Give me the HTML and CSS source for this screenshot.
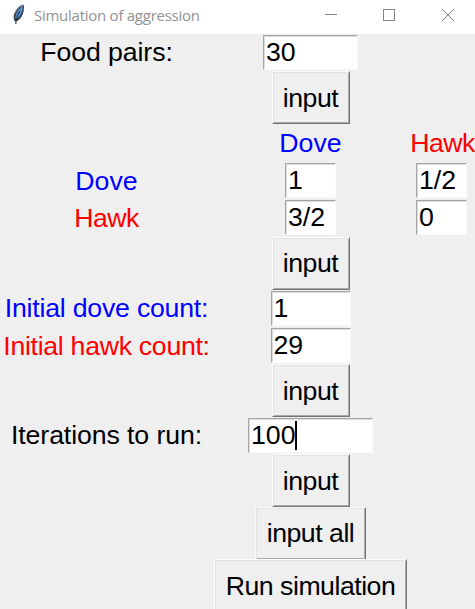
FILE: index.html
```html
<!DOCTYPE html>
<html lang="en">
<head>
<meta charset="utf-8">
<title>Simulation of aggression</title>
<link rel="stylesheet" href="styles.css">
</head>
<body>
<header class="titlebar">
  <svg class="feather" width="14" height="22" viewBox="0 0 14 22">
    <path d="M2.200 16.500C.7 12 2.500 7.200 6 3.500 8 1.400 10.500.4 11.600.8c1 3.200.1 8.500-2.200 12.200C7.800 15.500 5.500 17 3.500 17.500z" fill="#35414d"/>
    <path d="M3.500 14.500C3 11 5.500 6 10.800 2 11 6 9 11.500 4.800 15z" fill="#5594d6"/>
    <path d="M2.500 9.500C4 6 7 2.500 10.500 1.300" fill="none" stroke="#a2a9af"/>
    <path d="M3.800 20C3.800 16 5.200 11 8 7" fill="none" stroke="#1b222a"/>
  </svg>
  <span class="title">Simulation of aggression</span>
  <svg class="controls" width="132" height="14" viewBox="0 0 132 14" fill="none" stroke="#858585" shape-rendering="crispEdges">
    <path d="M0 6.500h12"/>
    <path d="M58.500 1.500h11v11h-11z"/>
    <path d="M117 1l12 12M129 1l-12 12" shape-rendering="auto"/>
  </svg>
</header>
<main class="form">
  <label class="c1 l-food">Food pairs:</label>
  <input class="c2 w-food" value="30">
  <button class="c2">input</button>
  <span class="c2 dove">Dove</span>
  <span class="c3 hawk name">Hawk</span>
  <span class="c1 dove">Dove</span>
  <input class="c2 w-cell" value="1">
  <input class="c3 w-cell" value="1/2">
  <span class="c1 hawk name">Hawk</span>
  <input class="c2 w-cell" value="3/2">
  <input class="c3 w-cell" value="0">
  <button class="c2">input</button>
  <label class="c1 dove l-dove">Initial dove count:</label>
  <input class="c2 w-count" value="1">
  <label class="c1 hawk l-hawk">Initial hawk count:</label>
  <input class="c2 w-count" value="29">
  <button class="c2">input</button>
  <label class="c1 l-iter">Iterations to run:</label>
  <div class="c2 caret-field"><input class="w-iter" value="100"><i class="caret"></i></div>
  <button class="c2">input</button>
  <button class="c2 b-all">input all</button>
  <button class="c2 b-run">Run simulation</button>
</main>
</body>
</html>
```
FILE: styles.css
```css
* { box-sizing: border-box; }
html, body { height: 100%; }
body {
  margin: 0;
  overflow: hidden;
  background: #efefef;
  color: #000;
  font: 26.700px/30px "Liberation Sans", Arial, sans-serif;
}
.titlebar {
  display: flex;
  align-items: center;
  height: 34px;
  padding: 0 15px 3px 12px;
  background: #fff;
}
.feather { margin-top: -1px; }
.title {
  margin: -2px 0 0 8px;
  color: #929292;
  font: 15px/20px "Open Sans", "Noto Sans", sans-serif;
  letter-spacing: -0.260px;
  white-space: nowrap;
}
.controls { margin: -2px 3px 0 auto; }
.form {
  display: grid;
  grid-template-columns: 213px 195px 67px;
  grid-template-rows: 37px 53px 38px 37px 37.500px 53px 37.500px 37px 53px 37px 53px 52px 53px;
  align-items: center;
  justify-items: center;
  white-space: nowrap;
}
.c1 { grid-column: 1; }
.c2 { grid-column: 2; }
.c3 { grid-column: 3; }
.dove { color: #00f; }
.hawk { color: #f00; }
.name { letter-spacing: -0.500px; }
.c3.name { margin-left: 2px; }
.l-food, .l-iter { letter-spacing: -0.100px; margin-top: -1px; }
.l-dove { letter-spacing: -0.220px; }
.l-hawk { letter-spacing: -0.300px; }
input {
  height: 35px;
  padding: 0 0 0 2px;
  border: 1px solid;
  border-color: #a5a5a5 #fbfbfb #fbfbfb #a5a5a5;
  border-radius: 0;
  outline: 0;
  background: #fff;
  box-shadow: inset 1px 1px #dcdcdc;
  color: #000;
  font: inherit;
}
.w-food { width: 95px; }
.w-cell { width: 51px; }
.w-count { width: 80px; }
.w-iter { width: 125px; }
.caret-field { display: flex; position: relative; }
.caret {
  position: absolute;
  left: 47px;
  top: 3px;
  width: 2px;
  height: 29px;
  background: #000;
}
button {
  width: 78px;
  height: 53px;
  padding: 0;
  border: 1px solid;
  border-color: #fbfbfb #747474 #747474 #fbfbfb;
  border-radius: 0;
  background: #efefef;
  box-shadow: inset 1px 1px #e2e2e2, inset -1px -1px #a8a8a8;
  color: #000;
  font: inherit;
  letter-spacing: -0.500px;
}
.b-all { width: 111px; }
.b-run { width: 193px; }
```
